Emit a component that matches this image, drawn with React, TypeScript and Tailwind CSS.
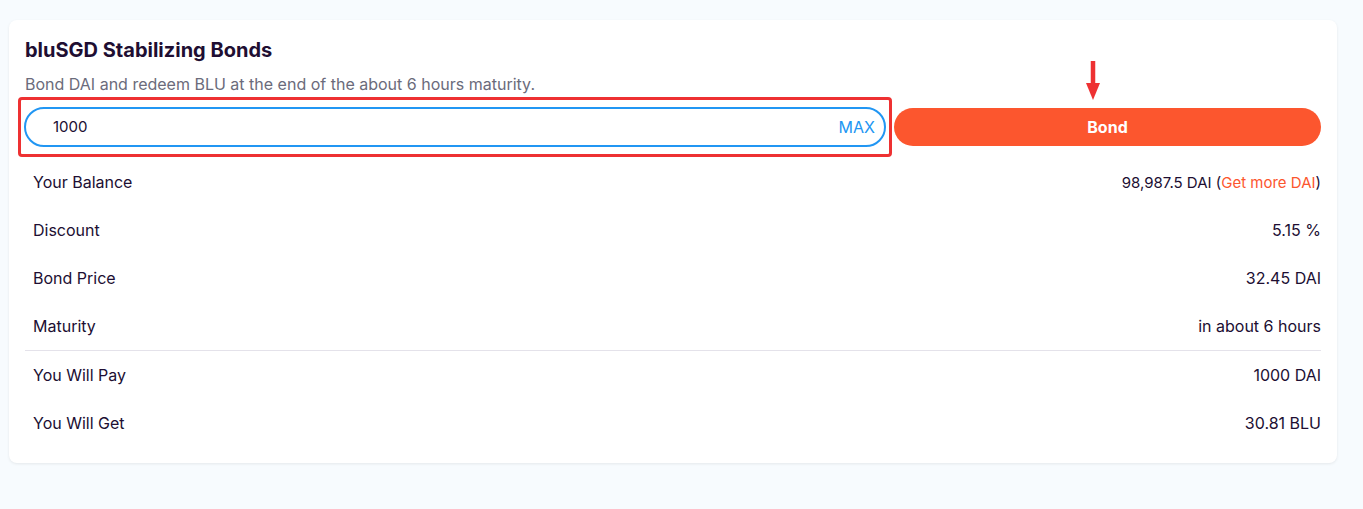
import React from 'react';

const rows = [
  { label: 'Your Balance', value: 'balance' },
  { label: 'Discount', value: '5.15 %' },
  { label: 'Bond Price', value: '32.45 DAI' },
  { label: 'Maturity', value: 'in about 6 hours' },
];

const totals = [
  { label: 'You Will Pay', value: '1000 DAI' },
  { label: 'You Will Get', value: '30.81 BLU' },
];

function Row({ label, children }: { label: string; children: React.ReactNode }) {
  return (
    <div className="flex h-[48px] items-center justify-between pl-2 text-[16px] text-[#200e32]">
      <span>{label}</span>
      <span>{children}</span>
    </div>
  );
}

export default function App() {
  return (
    <div className="min-h-[509px] bg-[#f7fbfe] px-[9px] pt-[20px] font-['Inter',sans-serif]">
      <div className="w-[1328px] rounded-lg bg-white px-4 pb-[16px] pt-[16px] shadow-[0_1px_3px_rgba(0,0,0,0.08)]">
        <h1 className="text-[20px] font-bold leading-[28px] text-[#200e32]">bluSGD Stabilizing Bonds</h1>
        <p className="mt-[8px] text-[16px] leading-[24px] text-[#6b6b7b]">
          Bond DAI and redeem BLU at the end of the about 6 hours maturity.
        </p>

        <div className="relative mt-[1px] flex items-center">
          <div className="-ml-[7px] rounded-[4px] border-[3px] border-[#ee3132] px-[3px] py-[7px]">
            <div className="flex h-[40px] w-[862px] items-center rounded-full border-2 border-[#2196f3] pl-[27px] pr-[9px]">
              <span className="flex-1 text-[15px] text-[#200e32]">1000</span>
              <span className="text-[16px] text-[#2196f3]">MAX</span>
            </div>
          </div>
          <button className="ml-[2px] flex h-[38px] flex-1 items-center justify-center rounded-full bg-[#fc562e] text-[16px] font-bold text-white">
            Bond
          </button>
          <svg className="absolute left-[1060px] top-[-36px]" width="16" height="40" viewBox="0 0 16 40">
            <rect x="5.75" y="0" width="4.5" height="25" fill="#ee3132" />
            <path d="M1 22 L15 22 L8 39 Z" fill="#ee3132" />
          </svg>
        </div>

        <div className="mt-[1px]">
          {rows.map((r) => (
            <Row key={r.label} label={r.label}>
              {r.value === 'balance' ? (
                <span className="text-[15px]">
                  98,987.5 DAI (<span className="text-[#fc562e]">Get more DAI</span>)
                </span>
              ) : (
                r.value
              )}
            </Row>
          ))}
          <div className="h-px bg-[#e4e2ea]" />
          {totals.map((r) => (
            <Row key={r.label} label={r.label}>
              {r.value}
            </Row>
          ))}
        </div>
      </div>
    </div>
  );
}
